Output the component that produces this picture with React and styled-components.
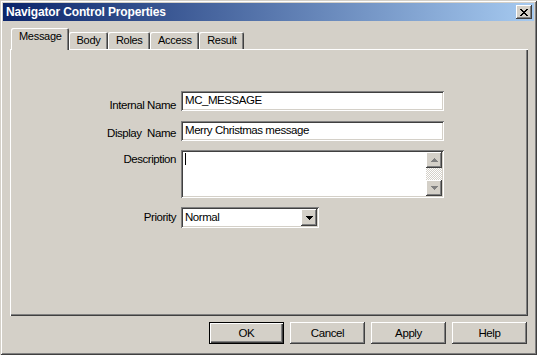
import React from 'react';
import styled, { createGlobalStyle, css } from 'styled-components';

const Global = createGlobalStyle`
  html, body { margin: 0; padding: 0; background: #D4D0C8; }
  body {
    font-family: "Liberation Sans", Arial, sans-serif;
    font-size: 11px;
    color: #000;
  }
  * { box-sizing: border-box; }
`;

const raisedButton = css`
  box-shadow: inset -1px -1px #404040, inset 1px 1px #FFFFFF,
    inset -2px -2px #808080, inset 2px 2px #D4D0C8;
`;

const sunken = css`
  box-shadow: inset 1px 1px #808080, inset -1px -1px #FFFFFF,
    inset 2px 2px #404040, inset -2px -2px #D4D0C8;
`;

const Window = styled.div`
  width: 537px;
  height: 355px;
  background: #D4D0C8;
  padding: 3px;
  display: flex;
  flex-direction: column;
  box-shadow: inset 1px 1px #D4D0C8, inset -1px -1px #404040,
    inset 2px 2px #FFFFFF, inset -2px -2px #808080;
`;

const TitleBar = styled.div`
  height: 18px;
  display: flex;
  align-items: center;
  justify-content: space-between;
  padding: 0 2px 0 3px;
  background: linear-gradient(to right, #0A246A, #A6CAF0);
`;

const Title = styled.span`
  color: #fff;
  font-weight: bold;
  font-size: 12px;
  letter-spacing: -0.15px;
  line-height: 18px;
`;

const CloseButton = styled.div`
  width: 16px;
  height: 14px;
  background: #D4D0C8;
  display: flex;
  align-items: center;
  justify-content: center;
  ${raisedButton};
`;

const Body = styled.div`
  flex: 1;
  display: flex;
  flex-direction: column;
  padding: 7px 6px 0 7px;
`;

const TabStrip = styled.div`
  height: 21px;
  display: flex;
  align-items: flex-end;
  padding-left: 1px;
  position: relative;
  z-index: 1;
`;

const Tab = styled.div`
  height: ${p => (p.$active ? 22 : 17)}px;
  margin-bottom: ${p => (p.$active ? -1 : 0)}px;
  padding: 1px ${p => (p.$active ? 7 : 7.5)}px 0 ${p => (p.$active ? 8 : 8)}px;
  background: #D4D0C8;
  line-height: 14px;
  letter-spacing: -0.3px;
  border-radius: 2px 2px 0 0;
  box-shadow: inset 1px 1px #FFFFFF, inset -1px 0 #404040, inset -2px 0 #808080;
  white-space: nowrap;
`;

const Panel = styled.div`
  height: 267px;
  background: #D4D0C8;
  padding: 42px 0 0 6px;
  box-shadow: inset 1px 1px #FFFFFF, inset -1px -1px #404040,
    inset -2px -2px #808080;
`;

const Form = styled.div`
  display: grid;
  grid-template-columns: 160px 263px;
  column-gap: 5px;
  row-gap: 9px;
  align-items: start;
`;

const Label = styled.div`
  text-align: right;
  padding-top: ${p => p.$top}px;
  line-height: 14px;
  font-size: 11.5px;
  letter-spacing: -0.45px;
  white-space: pre;
`;

const TextField = styled.div`
  height: 20px;
  background: #fff;
  padding: 2px 4px 0 4px;
  line-height: 14px;
  font-size: 11.5px;
  letter-spacing: -0.45px;
  ${sunken};
`;

const MemoField = styled.div`
  height: 48px;
  background: #fff;
  padding: 2px;
  display: flex;
  ${sunken};
`;

const MemoText = styled.div`
  flex: 1;
  padding: 1px 0 0 2px;
`;

const Caret = styled.div`
  width: 1px;
  height: 12px;
  background: #000;
`;

const ScrollBar = styled.div`
  width: 16px;
  display: flex;
  flex-direction: column;
`;

const ScrollButton = styled.div`
  width: 16px;
  height: 16px;
  background: #D4D0C8;
  display: flex;
  align-items: center;
  justify-content: center;
  ${raisedButton};
`;

const ScrollTrack = styled.div`
  flex: 1;
  background: repeating-conic-gradient(#D4D0C8 0 25%, #FFFFFF 0 50%) 0 0 / 2px 2px;
`;

const SelectBox = styled.div`
  width: 138px;
  height: 21px;
  background: #fff;
  padding: 2px;
  display: flex;
  align-items: stretch;
  ${sunken};
`;

const SelectValue = styled.div`
  flex: 1;
  padding: 1px 0 0 2px;
  line-height: 14px;
  font-size: 11.5px;
  letter-spacing: -0.45px;
`;

const DropButton = styled.div`
  width: 16px;
  background: #D4D0C8;
  display: flex;
  align-items: center;
  justify-content: center;
  ${raisedButton};
`;

const ButtonRow = styled.div`
  display: flex;
  justify-content: flex-end;
  gap: 6px;
  margin-top: 6px;
  padding-right: 1px;
`;

const PushButton = styled.div`
  width: 75px;
  height: 22px;
  display: flex;
  align-items: center;
  justify-content: center;
  background: #D4D0C8;
  font-size: 11.5px;
  letter-spacing: -0.4px;
  ${p =>
    p.$default
      ? css`
          box-shadow: inset 1px 1px #000, inset -1px -1px #000,
            inset 2px 2px #FFFFFF, inset -2px -2px #404040,
            inset -3px -3px #808080;
        `
      : raisedButton};
`;

const CloseGlyph = () => (
  <svg width="8" height="7" viewBox="0 0 8 7" shapeRendering="crispEdges">
    <path
      d="M0 0h2v1H0zM6 0h2v1H6zM1 1h2v1H1zM5 1h2v1H5zM2 2h4v1H2zM3 3h2v1H3zM2 4h4v1H2zM1 5h2v1H1zM5 5h2v1H5zM0 6h2v1H0zM6 6h2v1H6z"
      fill="#000"
    />
  </svg>
);

const Arrow = ({ dir = 'down', color = '#000' }) => (
  <svg width="7" height="4" viewBox="0 0 7 4" shapeRendering="crispEdges">
    {dir === 'down' ? (
      <path d="M0 0h7v1H0zM1 1h5v1H1zM2 2h3v1H2zM3 3h1v1H3z" fill={color} />
    ) : (
      <path d="M3 0h1v1H3zM2 1h3v1H2zM1 2h5v1H1zM0 3h7v1H0z" fill={color} />
    )}
  </svg>
);

const tabs = ['Message', 'Body', 'Roles', 'Access', 'Result'];

export default function App() {
  return (
    <>
      <Global />
      <Window>
        <TitleBar>
          <Title>Navigator Control Properties</Title>
          <CloseButton>
            <CloseGlyph />
          </CloseButton>
        </TitleBar>
        <Body>
          <TabStrip>
            {tabs.map((t, i) => (
              <Tab key={t} $active={i === 0}>
                {t}
              </Tab>
            ))}
          </TabStrip>
          <Panel>
            <Form>
              <Label $top={7}>Internal Name</Label>
              <TextField>MC_MESSAGE</TextField>
              <Label $top={5}>{'Display  Name'}</Label>
              <TextField>Merry Christmas message</TextField>
              <Label $top={2}>Description</Label>
              <MemoField>
                <MemoText>
                  <Caret />
                </MemoText>
                <ScrollBar>
                  <ScrollButton>
                    <Arrow dir="up" color="#808080" />
                  </ScrollButton>
                  <ScrollTrack />
                  <ScrollButton>
                    <Arrow dir="down" color="#808080" />
                  </ScrollButton>
                </ScrollBar>
              </MemoField>
              <Label $top={3}>Priority</Label>
              <SelectBox>
                <SelectValue>Normal</SelectValue>
                <DropButton>
                  <Arrow dir="down" />
                </DropButton>
              </SelectBox>
            </Form>
          </Panel>
          <ButtonRow>
            <PushButton $default>OK</PushButton>
            <PushButton>Cancel</PushButton>
            <PushButton>Apply</PushButton>
            <PushButton>Help</PushButton>
          </ButtonRow>
        </Body>
      </Window>
    </>
  );
}
